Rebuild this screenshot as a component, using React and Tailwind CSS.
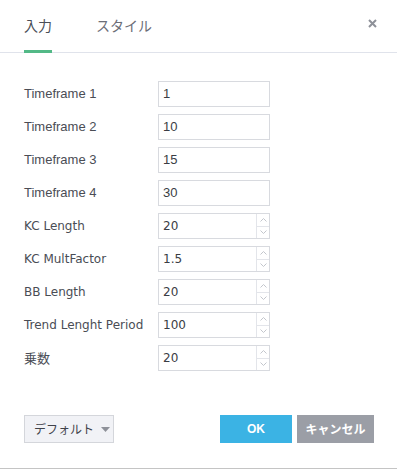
import { useState } from 'react';

const rows = [
    { label: 'Timeframe 1', value: '1' },
    { label: 'Timeframe 2', value: '10' },
    { label: 'Timeframe 3', value: '15' },
    { label: 'Timeframe 4', value: '30' },
    { label: 'KC Length', value: '20', spin: true },
    { label: 'KC MultFactor', value: '1.5', spin: true },
    { label: 'BB Length', value: '20', spin: true },
    { label: 'Trend Lenght Period', value: '100', spin: true },
    { label: '乗数', value: '20', spin: true, cjk: true },
];

const arial = "font-['Liberation_Sans','Noto_Sans_CJK_JP',sans-serif]";
const dejavu = "font-['DejaVu_Sans','Noto_Sans_CJK_JP',sans-serif]";
const cjk = "font-['Noto_Sans_CJK_JP',sans-serif]";

const Spinner = () => (
    <div className="flex flex-col w-[13px] border-l border-[#e3e5ea]">
        <div className="flex-1 flex items-center justify-center border-b border-[#e3e5ea]">
            <svg width="7" height="4" viewBox="0 0 7 4" fill="none" stroke="#c3c6cc" strokeWidth="1">
                <path d="M0.5 3.5 L3.5 0.5 L6.5 3.5" />
            </svg>
        </div>
        <div className="flex-1 flex items-center justify-center">
            <svg width="7" height="4" viewBox="0 0 7 4" fill="none" stroke="#c3c6cc" strokeWidth="1">
                <path d="M0.5 0.5 L3.5 3.5 L6.5 0.5" />
            </svg>
        </div>
    </div>
);

const App = () => {
    const [tab, setTab] = useState(0);

    return (
        <div className="w-[397px] h-[469px] bg-white flex flex-col border-b border-[#c4c4c4]">
            {/* Header */}
            <div className="flex items-stretch h-[53px] border-b border-[#e0e3eb] px-6">
                <button
                    onClick={() => setTab(0)}
                    className={`${cjk} text-[14px] text-[#4b4f58] flex items-center pt-[1px] border-b-[3px] ${tab === 0 ? 'border-[#53b987]' : 'border-transparent'} mb-[-1px]`}
                >
                    入力
                </button>
                <button
                    onClick={() => setTab(1)}
                    className={`${cjk} ml-[44px] text-[14px] text-[#6b6e77] flex items-center pt-[1px] border-b-[3px] ${tab === 1 ? 'border-[#53b987]' : 'border-transparent'} mb-[-1px]`}
                >
                    スタイル
                </button>
                <div className="flex-1" />
                <button className="flex items-start pt-[19px] mr-[-4px]">
                    <svg width="9" height="9" viewBox="0 0 9 9" stroke="#8e9199" strokeWidth="2">
                        <path d="M1 1 L8 8 M8 1 L1 8" />
                    </svg>
                </button>
            </div>

            {/* Body */}
            <div className="flex flex-col gap-[7px] pt-[28px] px-6">
                {rows.map((r, i) => (
                    <div key={i} className="flex items-center h-[26px]">
                        <div className={`w-[134px] text-[#4a4d55] ${r.cjk ? cjk + ' text-[13px]' : r.spin ? dejavu + ' text-[12px]' : arial + ' text-[13px]'}`}>
                            {r.label}
                        </div>
                        <div className="flex w-[112px] h-[26px] border border-[#d8dadf] bg-white">
                            <div className={`flex-1 flex items-center pl-[4px] text-[#3a3d44] ${r.spin ? dejavu + ' text-[12px]' : arial + ' text-[13px]'}`}>
                                {r.value}
                            </div>
                            {r.spin && <Spinner />}
                        </div>
                    </div>
                ))}
            </div>

            {/* Footer */}
            <div className="flex items-center px-6 mt-[44px]">
                <button className={`${cjk} whitespace-nowrap flex items-center gap-[7px] h-[28px] w-[90px] pl-[9px] border border-[#d4d6db] bg-[#f1f2f6] text-[12px] text-[#3f424a]`}>
                    デフォルト
                    <svg width="9" height="5" viewBox="0 0 9 5" fill="#8e9199">
                        <path d="M0 0 L9 0 L4.5 5 Z" />
                    </svg>
                </button>
                <div className="flex-1" />
                <button className={`${arial} h-[28px] w-[72px] bg-[#3bb3e4] text-white text-[12px] font-bold`}>
                    OK
                </button>
                <button className={`${cjk} whitespace-nowrap ml-[5px] mr-[-1px] h-[28px] w-[77px] bg-[#9b9ea6] text-white text-[12px] font-bold`}>
                    キャンセル
                </button>
            </div>
        </div>
    );
};

export default App;
